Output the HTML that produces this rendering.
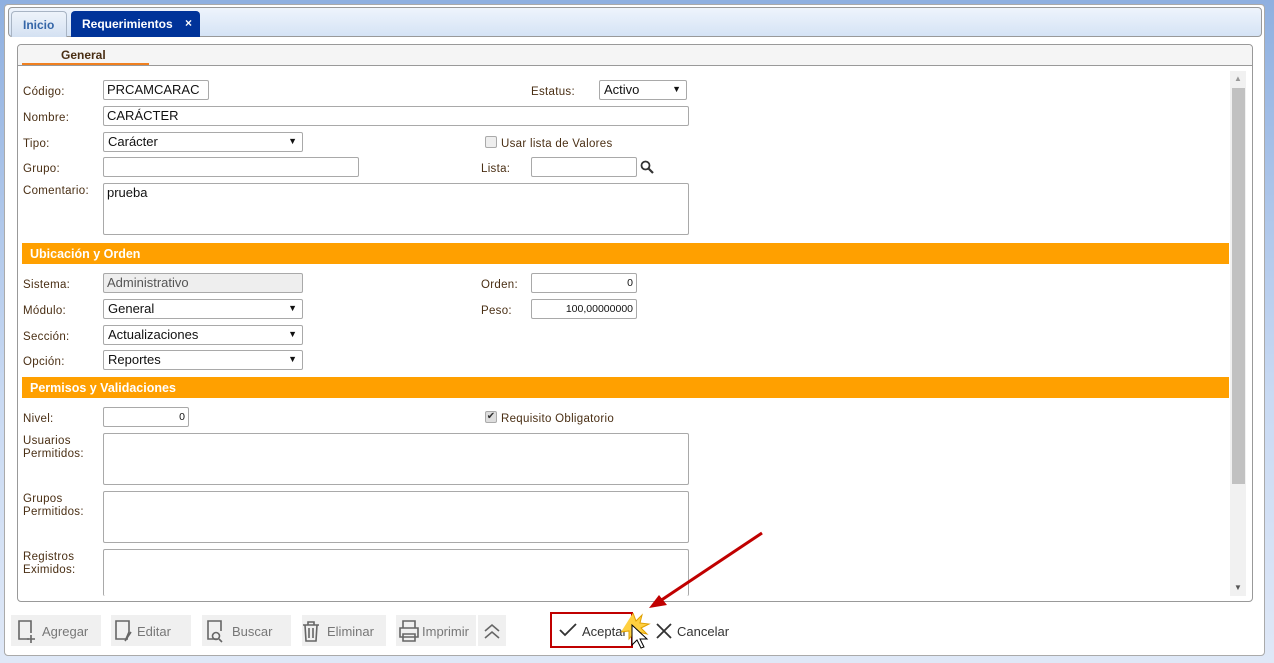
<!DOCTYPE html>
<html><head><meta charset="utf-8"><style>
*{box-sizing:border-box;margin:0;padding:0}
body{width:1274px;height:663px;background:linear-gradient(#8fb0e0,#c9daf3 60%,#dfe8f7);position:relative;overflow:hidden;font-family:"Liberation Sans",sans-serif;font-size:12px;color:#4a2f14}
.a{position:absolute}
.lbl{position:absolute;font-size:11.5px;color:#4a2f14;letter-spacing:.3px;margin-top:2px}
.in{position:absolute;background:#fff;border:1px solid #a9a9a9;border-radius:2px;font-size:13px;color:#111;padding:1px 3px;white-space:nowrap}
.sel{position:absolute;background:#fff;border:1px solid #a9a9a9;border-radius:2px;font-size:13px;color:#111;padding:1px 4px}
.sel:after{content:"▼";position:absolute;right:5px;top:3px;font-size:9px}
.num{text-align:right;font-size:10.5px;padding-top:3px}
.bar{position:absolute;left:22px;width:1207px;height:21px;background:#ffa000;color:#fff;font-weight:bold;font-size:12.5px;padding:4px 8px}
.btn{position:absolute;top:615px;height:31px;background:#f0f0f0;color:#777;font-size:13px;padding:9px 0 0 31px}
.ta{position:absolute;background:#fff;border:1px solid #a9a9a9;border-radius:2px}
</style></head><body>
<div class="a" style="left:4px;top:4px;width:1261px;height:652px;background:#fff;border:1px solid #aaa;border-radius:4px"></div>
<div class="a" style="left:8px;top:7px;width:1254px;height:30px;background:linear-gradient(#eef4fc,#d5e3f5);border:1px solid #999;border-radius:4px"></div>
<div class="a" style="left:11px;top:11px;width:56px;height:26px;background:linear-gradient(#eef3fa,#d4e1f2);border:1px solid #a8b4c4;border-bottom:none;border-radius:4px 4px 0 0;color:#3566a8;font-weight:bold;font-size:12px;padding:6px 0 0 11px">Inicio</div>
<div class="a" style="left:71px;top:11px;width:129px;height:26px;background:#003399;border-radius:4px 4px 0 0;color:#fff;font-weight:bold;font-size:12px;padding:6px 0 0 11px">Requerimientos<span style="position:absolute;left:114px;top:5px">×</span></div>
<div class="a" style="left:17px;top:44px;width:1236px;height:558px;border:1px solid #999;border-radius:4px;background:#fff"></div>
<div class="a" style="left:18px;top:45px;width:1234px;height:21px;background:#f5f5f5;border-bottom:1px solid #999;border-radius:4px 4px 0 0"></div>
<div class="a" style="left:61px;top:48px;font-weight:bold;color:#4a2f14;font-size:12px">General</div>
<div class="a" style="left:22px;top:63px;width:127px;height:2px;background:#f08020"></div>
<div class="a" style="left:1230px;top:71px;width:16px;height:525px;background:#f1f1f1"></div>
<div class="a" style="left:1232px;top:88px;width:13px;height:396px;background:#c1c1c1"></div>
<div class="a" style="left:1234px;top:74px;font-size:8px;color:#999">▲</div>
<div class="a" style="left:1234px;top:583px;font-size:8px;color:#555">▼</div>

<div class="lbl" style="left:23px;top:84px">Código:</div><div class="in" style="left:103px;top:80px;width:106px;height:20px">PRCAMCARAC</div>
<div class="lbl" style="left:531px;top:84px">Estatus:</div><div class="sel" style="left:599px;top:80px;width:88px;height:20px">Activo</div>
<div class="lbl" style="left:23px;top:110px">Nombre:</div><div class="in" style="left:103px;top:106px;width:586px;height:20px">CARÁCTER</div>
<div class="lbl" style="left:23px;top:136px">Tipo:</div><div class="sel" style="left:103px;top:132px;width:200px;height:20px">Carácter</div>
<div class="a" style="left:485px;top:136px;width:12px;height:12px;border:1px solid #aaa;background:#eee;border-radius:2px"></div><div class="lbl" style="left:501px;top:136px">Usar lista de Valores</div>
<div class="lbl" style="left:23px;top:161px">Grupo:</div><div class="in" style="left:103px;top:157px;width:256px;height:20px"></div>
<div class="lbl" style="left:481px;top:161px">Lista:</div><div class="in" style="left:531px;top:157px;width:106px;height:20px"></div>
<svg class="a" style="left:640px;top:160px" width="14" height="14"><circle cx="5.5" cy="5.5" r="4" fill="none" stroke="#333" stroke-width="1.8"/><path d="M8.5 8.5L13 13" stroke="#333" stroke-width="2.2"/></svg>
<div class="lbl" style="left:23px;top:183px">Comentario:</div><div class="ta" style="left:103px;top:183px;width:586px;height:52px;font-size:13px;color:#111;padding:1px 3px">prueba</div>

<div class="bar" style="top:243px">Ubicación y Orden</div>
<div class="lbl" style="left:23px;top:277px">Sistema:</div><div class="in" style="left:103px;top:273px;width:200px;height:20px;background:#eee;color:#555">Administrativo</div>
<div class="lbl" style="left:481px;top:277px">Orden:</div><div class="in num" style="left:531px;top:273px;width:106px;height:20px">0</div>
<div class="lbl" style="left:23px;top:303px">Módulo:</div><div class="sel" style="left:103px;top:299px;width:200px;height:20px">General</div>
<div class="lbl" style="left:481px;top:303px">Peso:</div><div class="in num" style="left:531px;top:299px;width:106px;height:20px">100,00000000</div>
<div class="lbl" style="left:23px;top:329px">Sección:</div><div class="sel" style="left:103px;top:325px;width:200px;height:20px">Actualizaciones</div>
<div class="lbl" style="left:23px;top:354px">Opción:</div><div class="sel" style="left:103px;top:350px;width:200px;height:20px">Reportes</div>

<div class="bar" style="top:377px">Permisos y Validaciones</div>
<div class="lbl" style="left:23px;top:411px">Nivel:</div><div class="in num" style="left:103px;top:407px;width:86px;height:20px">0</div>
<div class="a" style="left:485px;top:411px;width:12px;height:12px;border:1px solid #aaa;background:#ddd;border-radius:2px;font-size:10px;line-height:10px;color:#333;text-align:center">✔</div><div class="lbl" style="left:501px;top:411px">Requisito Obligatorio</div>
<div class="lbl" style="left:23px;top:433px;line-height:13px">Usuarios<br>Permitidos:</div><div class="ta" style="left:103px;top:433px;width:586px;height:52px"></div>
<div class="lbl" style="left:23px;top:491px;line-height:13px">Grupos<br>Permitidos:</div><div class="ta" style="left:103px;top:491px;width:586px;height:52px"></div>
<div class="lbl" style="left:23px;top:549px;line-height:13px">Registros<br>Eximidos:</div><div class="ta" style="left:103px;top:549px;width:586px;height:47px;border-bottom:none"></div>

<div class="btn" style="left:11px;width:90px">Agregar</div>
<div class="btn" style="left:111px;width:80px;padding-left:26px">Editar</div>
<div class="btn" style="left:202px;width:89px;padding-left:30px">Buscar</div>
<div class="btn" style="left:302px;width:84px;padding-left:25px">Eliminar</div>
<div class="btn" style="left:396px;width:80px;padding-left:26px">Imprimir</div>
<div class="btn" style="left:478px;width:28px;padding:0"></div>
<svg class="a" style="left:14px;top:617px" width="500" height="28" fill="none" stroke="#666" stroke-width="1.6">
<path d="M15 22H5V4h12v12"/><path d="M17 18v8M13 22h8"/>
<path d="M114 22H102V4h13v11l-3 7"/><path d="M111 24l6-9"/>
<path d="M203 22h-9V4h13v10"/><circle cx="202" cy="19" r="3.5"/><path d="M205 22l3 3"/>
<path d="M289 8h16M294 8V5h6v3M291 8l1 16h10l1-16M295 11v10M299 11v10"/>
<path d="M389 11V4h12v7M386 11h18v9h-18zM389 17h12v7h-12z"/>
<path d="M471 14l7-6 7 6M471 21l7-6 7 6"/>
</svg>
<div class="a" style="left:550px;top:612px;width:83px;height:36px;border:2px solid #c00000"></div>
<svg class="a" style="left:558px;top:622px" width="20" height="16"><path d="M2 8l5 5L18 2" fill="none" stroke="#333" stroke-width="1.8"/></svg>
<div class="a" style="left:582px;top:624px;font-size:13px;color:#333">Aceptar</div>
<svg class="a" style="left:655px;top:622px" width="18" height="18"><path d="M2 2l14 14M16 2L2 16" stroke="#333" stroke-width="1.8"/></svg>
<div class="a" style="left:677px;top:624px;font-size:13px;color:#333">Cancelar</div>
<svg class="a" style="left:615px;top:525px" width="160" height="135">
<path d="M147 8L42 78" stroke="#c00000" stroke-width="3"/><path d="M34 83l18-3-8-10z" fill="#c00000"/>
<path d="M18 88l3 8 6-6-2 8 9 1-8 4 6 6-9-2 1 8-5-7-5 6v-8l-8 1" fill="#ffd040" stroke="#e0a000"/>
<path d="M17 100v20l5-5 4 8 3-1-4-8h7z" fill="#fff" stroke="#000"/>
</svg>
</body></html>
